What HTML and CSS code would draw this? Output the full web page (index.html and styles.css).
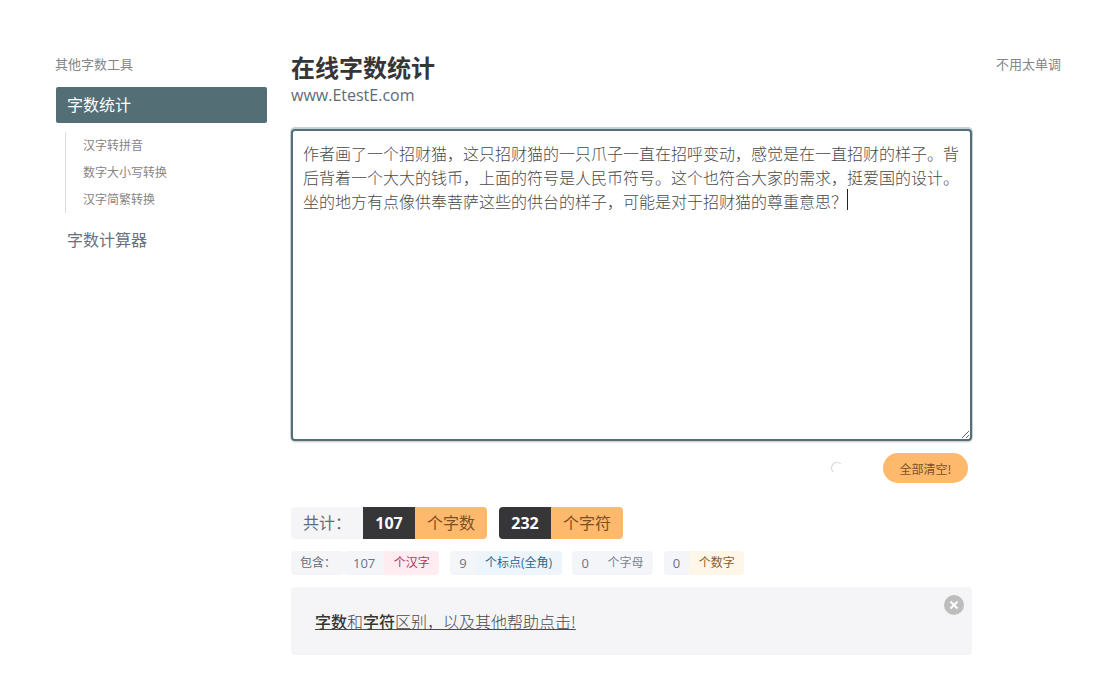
FILE: index.html
```html
<!DOCTYPE html>
<html lang="zh-CN">
<head>
<meta charset="utf-8">
<title>在线字数统计</title>
<link rel="stylesheet" href="styles.css">
</head>
<body>
<div class="page">
  <aside class="side">
    <p class="menu-label">其他字数工具</p>
    <a class="menu-item active">字数统计</a>
    <ul class="submenu">
      <li>汉字转拼音</li>
      <li>数字大小写转换</li>
      <li>汉字简繁转换</li>
    </ul>
    <a class="menu-item">字数计算器</a>
  </aside>
  <main class="main">
    <h1 class="title">在线字数统计</h1>
    <p class="subtitle">www.EtestE.com</p>
    <div class="editor">
      <textarea class="area" readonly>作者画了一个招财猫，这只招财猫的一只爪子一直在招呼变动，感觉是在一直招财的样子。背后背着一个大大的钱币，上面的符号是人民币符号。这个也符合大家的需求，挺爱国的设计。坐的地方有点像供奉菩萨这些的供台的样子，可能是对于招财猫的尊重意思？</textarea>
      <span class="caret"></span>
    </div>
    <div class="actions">
      <span class="spinner"></span>
      <button class="clear">全部清空!</button>
    </div>
    <div class="totals">
      <span class="t-label">共计：</span>
      <span class="t-num">107</span><span class="t-unit t-gap">个字数</span>
      <span class="t-num">232</span><span class="t-unit">个字符</span>
    </div>
    <div class="details">
      <span class="d-tag d-label">包含：</span>
      <span class="d-group"><span class="d-tag d-num">107</span><span class="d-tag d-pink">个汉字</span></span>
      <span class="d-group"><span class="d-tag d-num">9</span><span class="d-tag d-blue">个标点(全角)</span></span>
      <span class="d-group"><span class="d-tag d-num">0</span><span class="d-tag d-grey">个字母</span></span>
      <span class="d-group"><span class="d-tag d-num">0</span><span class="d-tag d-cream">个数字</span></span>
    </div>
    <div class="notice">
      <a class="notice-link"><b>字数</b>和<b>字符</b>区别，以及其他帮助点击!</a>
      <span class="close"></span>
    </div>
  </main>
  <div class="right">不用太单调</div>
</div>
</body>
</html>
```
FILE: styles.css
```css
* { box-sizing: border-box; }
html, body { margin: 0; padding: 0; }
body {
  background: #fff;
  color: #4a4a4a;
  font-family: "Open Sans", "Noto Sans CJK SC", sans-serif;
  font-size: 16px;
  overflow: hidden;
}
.page {
  display: flex;
  align-items: flex-start;
  width: 1100px;
  height: 673px;
  padding: 48px 39px 0 56px;
}
.side { width: 211px; flex: none; margin-right: 24px; }
.menu-label {
  margin: 7px 0 14px -1px;
  font-size: 13px;
  line-height: 18px;
  color: #868686;
}
.menu-item {
  display: block;
  height: 36px;
  padding: 0 12px 0 11px;
  font-size: 16px;
  line-height: 36px;
  color: #66727d;
  border-radius: 2px;
}
.menu-item.active { background: #546e76; color: #fff; }
.submenu {
  list-style: none;
  margin: 9px 0 9px 9px;
  padding: 0 0 0 17px;
  border-left: 1px solid #dbdbdb;
  font-size: 12px;
  line-height: 27px;
  color: #858585;
}
.main { width: 681px; flex: none; }
.title {
  margin: 3px 0 0;
  font-size: 24px;
  line-height: 34px;
  font-weight: 700;
  color: #363636;
}
.subtitle {
  margin: 0;
  font-size: 16px;
  line-height: 20px;
  color: #5f6b76;
}
.editor { position: relative; height: 312px; margin-top: 24px; }
.area {
  display: block;
  width: 100%;
  height: 100%;
  padding: 10px;
  border: 2px solid #546e76;
  border-radius: 4px;
  outline: none;
  box-shadow: 0 -1px 0 1px #c5d1d4, 0 1px 2px rgba(10, 10, 10, 0.25);
  font-family: "Noto Sans CJK SC", sans-serif;
  font-size: 16px;
  font-weight: 300;
  line-height: 24px;
  color: #4a4a4a;
  resize: vertical;
}
.caret {
  position: absolute;
  left: 556px;
  top: 60px;
  width: 1px;
  height: 21px;
  background: #222;
}
.actions {
  display: flex;
  align-items: center;
  justify-content: flex-end;
  height: 30px;
  margin-top: 12px;
  padding-right: 4px;
}
.spinner {
  width: 12px;
  height: 12px;
  margin-right: 40px;
  border: 1.5px solid #d5d5d5;
  border-right-color: transparent;
  border-bottom-color: transparent;
  border-radius: 50%;
}
.clear {
  width: 85px;
  height: 30px;
  padding: 0;
  border: 0;
  border-radius: 15px;
  background: #feb96c;
  color: #7b5226;
  font-family: "Noto Sans CJK SC", sans-serif;
  font-size: 12px;
}
.totals {
  display: flex;
  margin-top: 24px;
  height: 32px;
  font-size: 16px;
  line-height: 32px;
}
.t-label {
  width: 72px;
  padding-left: 12px;
  background: #f5f4f7;
  border-radius: 4px 0 0 4px;
  color: #5f6b76;
}
.t-num {
  width: 52px;
  text-align: center;
  background: #363537;
  color: #fff;
  font-weight: 700;
}
.t-unit + .t-num { border-radius: 4px 0 0 4px; }
.t-unit {
  width: 72px;
  text-align: center;
  background: #feb96c;
  color: #7b5226;
  border-radius: 0 4px 4px 0;
}
.t-gap { margin-right: 12px; }
.details {
  display: flex;
  height: 24px;
  margin-top: 12px;
  font-size: 12px;
  line-height: 24px;
  white-space: nowrap;
}
.d-group { display: flex; margin-right: 10.8px; }
.d-tag { display: block; padding: 0 9.5px; text-align: center; }
.d-label { width: 53px; padding: 0 0 0 9px; text-align: left; background: #f5f5f8; color: #5f6b76; border-radius: 4px; }
.d-num { padding: 0 9px; background: #f4f5f8; color: #6b7480; font-size: 13px; border-radius: 4px 0 0 4px; }
.d-pink { background: #feecf1; color: #b8355f; border-radius: 0 4px 4px 0; }
.d-blue { background: #edf5fb; color: #29698f; border-radius: 0 4px 4px 0; }
.d-grey { background: #f3f5f8; color: #7a8692; border-radius: 0 4px 4px 0; }
.d-cream { background: #fff6ea; color: #8b5d24; border-radius: 0 4px 4px 0; }
.notice {
  position: relative;
  height: 68px;
  margin-top: 12px;
  padding: 24px;
  background: #f5f4f7;
  border-radius: 4px;
  font-family: "Noto Sans CJK SC", sans-serif;
  font-size: 16px;
  font-weight: 300;
  line-height: 20px;
  color: #4a4a4a;
}
.notice-link { text-decoration: underline; }
.notice-link b { color: #363636; font-weight: 500; }
.close {
  position: absolute;
  top: 8px;
  right: 8px;
  width: 20px;
  height: 20px;
  border-radius: 50%;
  background: #bdbdbd;
}
.close::before, .close::after {
  content: "";
  position: absolute;
  left: 5px;
  top: 9px;
  width: 10px;
  height: 2px;
  background: #fff;
  transform: rotate(45deg);
}
.close::after { transform: rotate(-45deg); }
.right {
  margin: 7px 0 0 24px;
  font-size: 13px;
  line-height: 18px;
  color: #868686;
  white-space: nowrap;
}
```
